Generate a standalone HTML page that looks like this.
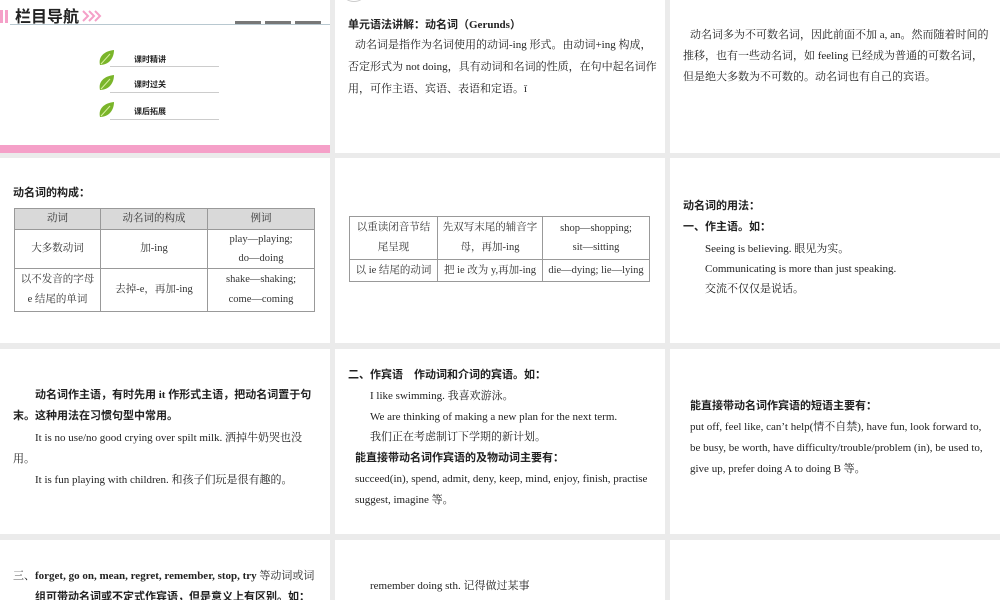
<!DOCTYPE html>
<html><head><meta charset="utf-8"><style>
*{margin:0;padding:0;box-sizing:border-box}
body{width:1000px;height:600px;background:#ebebeb;position:relative;overflow:hidden;font-family:"Liberation Serif","Noto Serif CJK SC",serif;font-size:11px;color:#222}
.p{position:absolute;background:#fff;overflow:hidden}
.l{position:absolute;white-space:nowrap;line-height:14px}
b{font-family:"Liberation Serif","Noto Sans CJK SC",sans-serif;font-weight:bold}
table{position:absolute;border-collapse:collapse;font-size:10.5px;color:#333}
td{border:1px solid #999;text-align:center;line-height:20px;padding:0 2px}
.h td{background:#d9d9d9;line-height:20px}
</style></head><body>
<!-- row 1 -->
<div class="p" style="left:0;top:0;width:330px;height:153px">
 <div style="position:absolute;left:0;top:10px;width:3px;height:13px;background:#f5a0c8"></div>
 <div style="position:absolute;left:5px;top:10px;width:3px;height:13px;background:#f5a0c8"></div>
 <div class="l" style="left:15px;top:6px;font-size:16px;line-height:18px;font-family:'Noto Sans CJK SC',sans-serif;font-weight:bold;color:#222">栏目导航</div>
 <svg style="position:absolute;left:82px;top:10px" width="20" height="12"><path d="M1 1 L6 6 L1 11 M7 1 L12 6 L7 11 M13 1 L18 6 L13 11" stroke="#f5a0c8" stroke-width="2" fill="none"/></svg>
 <div style="position:absolute;left:10px;top:24px;width:320px;height:1px;background:#b8c8d0"></div>
 <div style="position:absolute;left:235px;top:21px;width:26px;height:3px;background:#777"></div>
 <div style="position:absolute;left:265px;top:21px;width:26px;height:3px;background:#777"></div>
 <div style="position:absolute;left:295px;top:21px;width:26px;height:3px;background:#777"></div>
 <svg style="position:absolute;left:98px;top:49px" width="18" height="18"><path d="M2 16 C0 8 6 2 16 1 C16 9 11 16 2 16Z" fill="#7ab52a"/><path d="M3 15 L12 5" stroke="#d8f0a0" stroke-width="1"/></svg>
 <svg style="position:absolute;left:98px;top:74px" width="18" height="18"><path d="M2 16 C0 8 6 2 16 1 C16 9 11 16 2 16Z" fill="#7ab52a"/><path d="M3 15 L12 5" stroke="#d8f0a0" stroke-width="1"/></svg>
 <svg style="position:absolute;left:98px;top:101px" width="18" height="18"><path d="M2 16 C0 8 6 2 16 1 C16 9 11 16 2 16Z" fill="#7ab52a"/><path d="M3 15 L12 5" stroke="#d8f0a0" stroke-width="1"/></svg>
 <div class="l" style="left:134px;top:53px;font-size:8px;font-weight:bold;font-family:'Noto Sans CJK SC',sans-serif">课时精讲</div>
 <div class="l" style="left:134px;top:78px;font-size:8px;font-weight:bold;font-family:'Noto Sans CJK SC',sans-serif">课时过关</div>
 <div class="l" style="left:134px;top:105px;font-size:8px;font-weight:bold;font-family:'Noto Sans CJK SC',sans-serif">课后拓展</div>
 <div style="position:absolute;left:110px;top:66px;width:109px;height:1px;background:#ccc"></div>
 <div style="position:absolute;left:110px;top:92px;width:109px;height:1px;background:#ccc"></div>
 <div style="position:absolute;left:110px;top:119px;width:109px;height:1px;background:#ccc"></div>
 <div style="position:absolute;left:0;top:145px;width:330px;height:8px;background:#f5a0c8"></div>
</div>
<div class="p" style="left:335px;top:0;width:330px;height:153px">
 <div style="position:absolute;left:8px;top:-14px;width:22px;height:16px;border-radius:50%;border:1px solid #ccc"></div>
 <div class="l" style="left:13px;top:18px"><b>单元语法讲解：动名词（Gerunds）</b></div>
 <div class="l" style="left:20px;top:38px">动名词是指作为名词使用的动词-ing 形式。由动词+ing 构成，</div>
 <div class="l" style="left:13px;top:60px">否定形式为 not doing，具有动词和名词的性质，在句中起名词作</div>
 <div class="l" style="left:13px;top:82px">用，可作主语、宾语、表语和定语。ǐ</div>
</div>
<div class="p" style="left:670px;top:0;width:330px;height:153px">
 <div class="l" style="left:20px;top:28px">动名词多为不可数名词，因此前面不加 a, an。然而随着时间的</div>
 <div class="l" style="left:13px;top:49px">推移，也有一些动名词，如 feeling 已经成为普通的可数名词，</div>
 <div class="l" style="left:13px;top:70px">但是绝大多数为不可数的。动名词也有自己的宾语。</div>
</div>
<!-- row 2 -->
<div class="p" style="left:0;top:158px;width:330px;height:185px">
 <div class="l" style="left:13px;top:28px"><b>动名词的构成：</b></div>
 <table style="left:14px;top:50px;width:301px">
  <tr class="h"><td style="width:86px">动词</td><td style="width:107px">动名词的构成</td><td>例词</td></tr>
  <tr><td style="height:38px">大多数动词</td><td>加-ing</td><td style="line-height:19px">play—playing;<br>do—doing</td></tr>
  <tr><td style="height:43px;line-height:20px">以不发音的字母<br>e 结尾的单词</td><td>去掉-e，再加-ing</td><td style="line-height:20px">shake—shaking;<br>come—coming</td></tr>
 </table>
</div>
<div class="p" style="left:335px;top:158px;width:330px;height:185px">
 <table style="left:14px;top:58px;width:301px">
  <tr><td style="width:88px;height:43px;line-height:20px">以重读闭音节结<br>尾呈现</td><td style="width:105px;line-height:20px">先双写末尾的辅音字<br>母，再加-ing</td><td style="line-height:19px">shop—shopping;<br>sit—sitting</td></tr>
  <tr><td style="height:22px">以 ie 结尾的动词</td><td>把 ie 改为 y,再加-ing</td><td>die—dying; lie—lying</td></tr>
 </table>
</div>
<div class="p" style="left:670px;top:158px;width:330px;height:185px">
 <div class="l" style="left:13px;top:41px"><b>动名词的用法：</b></div>
 <div class="l" style="left:13px;top:62px"><b>一、作主语。如：</b></div>
 <div class="l" style="left:35px;top:84px">Seeing is believing. 眼见为实。</div>
 <div class="l" style="left:35px;top:104px">Communicating is more than just speaking.</div>
 <div class="l" style="left:35px;top:124px">交流不仅仅是说话。</div>
</div>
<!-- row 3 -->
<div class="p" style="left:0;top:349px;width:330px;height:185px">
 <div class="l" style="left:35px;top:39px"><b>动名词作主语，有时先用 it 作形式主语，把动名词置于句</b></div>
 <div class="l" style="left:13px;top:60px"><b>末。这种用法在习惯句型中常用。</b></div>
 <div class="l" style="left:35px;top:82px">It is no use/no good crying over spilt milk. 洒掉牛奶哭也没</div>
 <div class="l" style="left:13px;top:103px">用。</div>
 <div class="l" style="left:35px;top:124px">It is fun playing with children. 和孩子们玩是很有趣的。</div>
</div>
<div class="p" style="left:335px;top:349px;width:330px;height:185px">
 <div class="l" style="left:13px;top:19px"><b>二、作宾语　作动词和介词的宾语。如：</b></div>
 <div class="l" style="left:35px;top:40px">I like swimming. 我喜欢游泳。</div>
 <div class="l" style="left:35px;top:61px">We are thinking of making a new plan for the next term.</div>
 <div class="l" style="left:35px;top:81px">我们正在考虑制订下学期的新计划。</div>
 <div class="l" style="left:20px;top:102px"><b>能直接带动名词作宾语的及物动词主要有：</b></div>
 <div class="l" style="left:20px;top:123px">succeed(in), spend, admit, deny, keep, mind, enjoy, finish, practise</div>
 <div class="l" style="left:20px;top:144px">suggest, imagine 等。</div>
</div>
<div class="p" style="left:670px;top:349px;width:330px;height:185px">
 <div class="l" style="left:20px;top:50px"><b>能直接带动名词作宾语的短语主要有：</b></div>
 <div class="l" style="left:20px;top:71px">put off, feel like, can’t help(情不自禁), have fun, look forward to,</div>
 <div class="l" style="left:20px;top:92px">be busy, be worth, have difficulty/trouble/problem (in), be used to,</div>
 <div class="l" style="left:20px;top:113px">give up, prefer doing A to doing B 等。</div>
</div>
<!-- row 4 -->
<div class="p" style="left:0;top:540px;width:330px;height:60px">
 <div class="l" style="left:13px;top:29px">三、<b>forget, go on, mean, regret, remember, stop, try</b> 等动词或词</div>
 <div class="l" style="left:35px;top:50px"><b>组可带动名词或不定式作宾语，但是意义上有区别。如：</b></div>
</div>
<div class="p" style="left:335px;top:540px;width:330px;height:60px">
 <div class="l" style="left:35px;top:39px">remember doing sth. 记得做过某事</div>
</div>
<div class="p" style="left:670px;top:540px;width:330px;height:60px"></div>
</body></html>
